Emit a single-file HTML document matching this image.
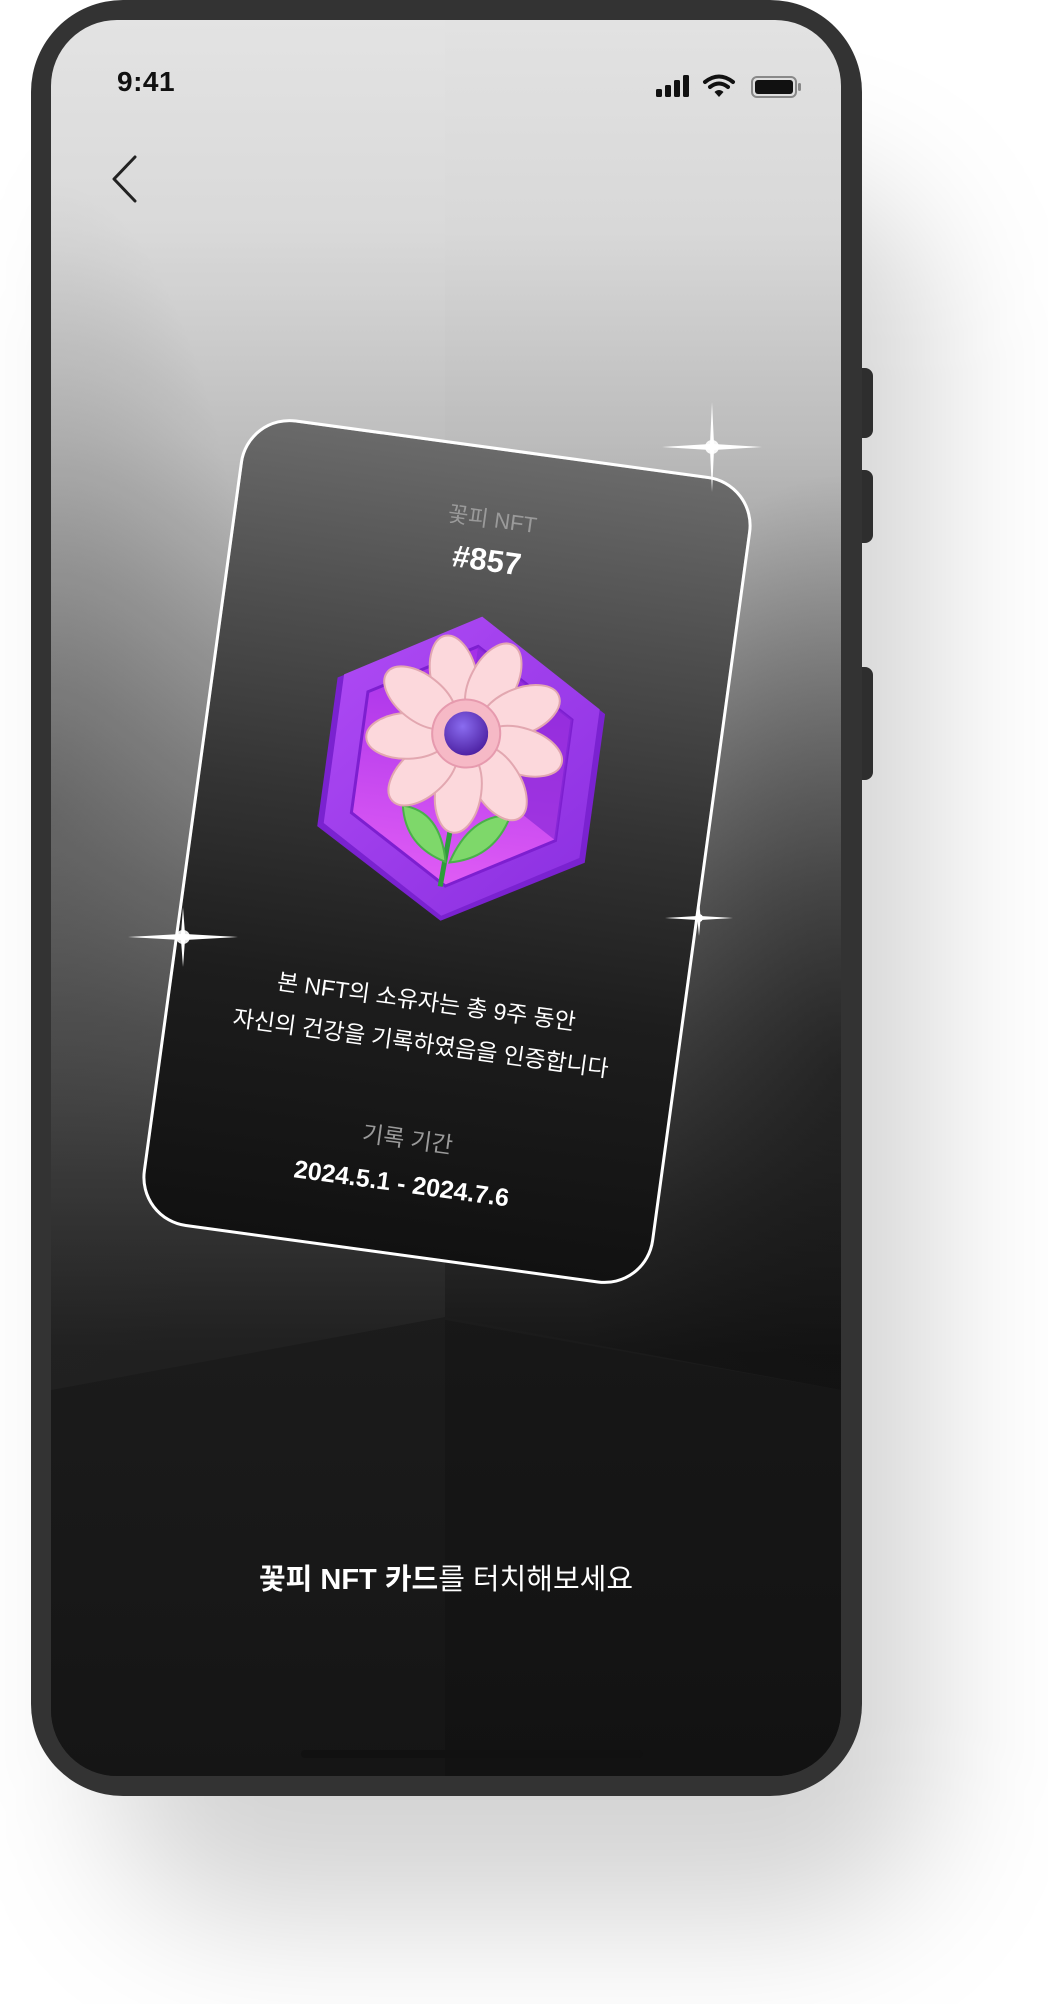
<!DOCTYPE html>
<html><head><meta charset="utf-8">
<style>
*{margin:0;padding:0;box-sizing:border-box}
html,body{width:1048px;height:2004px;background:#fff;overflow:hidden;font-family:"Liberation Sans","Noto Sans CJK KR",sans-serif}
.shadow{position:absolute;left:110px;top:180px;width:820px;height:1740px;border-radius:140px;background:rgba(0,0,0,0.17);filter:blur(70px)}
.phone{position:absolute;left:31px;top:0;width:831px;height:1796px;border-radius:92px;background:#333}
.btn{position:absolute;left:858px;width:15px;background:#2e2e2e;border-radius:0 8px 8px 0}
.screen{position:absolute;left:51px;top:20px;width:790px;height:1756px;border-radius:66px;overflow:hidden;
background:
radial-gradient(ellipse 300px 900px at 0% 45%,rgba(40,40,40,0.3),rgba(40,40,40,0) 70%),
radial-gradient(ellipse 380px 800px at 100% 60%,rgba(10,10,10,0.55),rgba(10,10,10,0) 75%),
linear-gradient(to bottom,#e2e2e2 0%,#d8d8d8 12%,#bcbcbc 24%,#959595 36%,#727272 47%,#4a4a4a 58%,#2a2a2a 68%,#161616 76%,#111 100%)}
.lineL{position:absolute;left:0;top:0;width:394px;height:100%;background:rgba(255,255,255,0.045)}
.floor{position:absolute;left:0;top:0;width:790px;height:1756px;
background:linear-gradient(to bottom,#242424 0%,#1f1f1f 60%,#151515 100%);
clip-path:polygon(0 1370px,394px 1297px,790px 1370px,790px 1756px,0 1756px)}
.floorR{position:absolute;left:394px;top:1300px;width:396px;height:456px;background:rgba(0,0,0,0.12);clip-path:polygon(0 0,396px 70px,396px 456px,0 456px)}
.time{position:absolute;left:66px;top:46px;font-size:28px;font-weight:bold;color:#111;letter-spacing:0.5px}
.bottomtxt{position:absolute;left:0;width:790px;top:1536px;text-align:center;color:#fff;font-size:29px}
.home{position:absolute;left:250px;top:1730px;width:342px;height:8px;border-radius:4px;background:#111}
.card{position:absolute;left:189px;top:444px;width:516px;height:815px;border-radius:50px;border:3px solid #fff;
background:linear-gradient(to bottom,#6a6a6a 0%,#4e4e4e 22%,#333 45%,#1d1d1d 68%,#111 100%);
transform:rotate(7.8deg);text-align:center;color:#fff}
.c1{position:absolute;top:52px;width:100%;font-size:22px;color:#9a9a9a}
.c2{position:absolute;top:93px;width:100%;font-size:31px;font-weight:bold}
.hex{position:absolute;left:113px;top:165px}
.c3{position:absolute;top:535px;width:100%;font-size:23px;line-height:42px}
.c4{position:absolute;top:676px;width:100%;font-size:23px;color:#9a9a9a}
.c5{position:absolute;top:726px;width:100%;font-size:25px;font-weight:bold}
.spark{position:absolute}
</style></head><body>
<div class="shadow"></div>
<div class="btn" style="top:368px;height:70px"></div>
<div class="btn" style="top:470px;height:73px"></div>
<div class="btn" style="top:667px;height:113px"></div>
<div class="phone"></div>
<div class="screen">
  <div class="lineL"></div>
  <div class="floor"></div>
  <div class="floorR"></div>
  <div class="time">9:41</div>
  <svg style="position:absolute;left:605px;top:52px" width="150" height="30" viewBox="0 0 150 30">
    <rect x="0" y="17" width="6" height="8" rx="1.5" fill="#111"/>
    <rect x="9" y="13" width="6" height="12" rx="1.5" fill="#111"/>
    <rect x="18" y="8" width="6" height="17" rx="1.5" fill="#111"/>
    <rect x="27" y="3" width="6" height="22" rx="1.5" fill="#111"/>
    <path d="M49 10 Q63 -1 77 10" stroke="#111" stroke-width="4" fill="none" stroke-linecap="round"/>
    <path d="M54 15 Q63 8 72 15" stroke="#111" stroke-width="4" fill="none" stroke-linecap="round"/>
    <path d="M58.5 20 L63 25 L67.5 20 Q63 16 58.5 20Z" fill="#111"/>
    <rect x="96" y="5" width="44" height="20" rx="5" fill="none" stroke="#888" stroke-width="2"/>
    <rect x="99" y="8" width="38" height="14" rx="3" fill="#111"/>
    <rect x="142" y="11" width="3" height="8" rx="1.5" fill="#888"/>
  </svg>
  <svg style="position:absolute;left:60px;top:135px" width="30" height="50" viewBox="0 0 30 50">
    <path d="M24 2 L3 24 L24 46" stroke="#222" stroke-width="3" fill="none" stroke-linecap="round" stroke-linejoin="round"/>
  </svg>
  <div class="bottomtxt"><b>꽃피 NFT 카드</b>를 터치해보세요</div>
  <div class="home"></div>
</div>

<div class="card">
  <div class="c1">꽃피 NFT</div>
  <div class="c2">#857</div>
  <svg class="hex" width="290" height="310" viewBox="0 0 290 310">
    <defs>
      <linearGradient id="hg" x1="0" y1="0" x2="1" y2="1"><stop offset="0" stop-color="#b04bf5"/><stop offset="1" stop-color="#8a2fe0"/></linearGradient>
      <linearGradient id="ig" x1="0" y1="0" x2="0" y2="1"><stop offset="0" stop-color="#a22ee8"/><stop offset="1" stop-color="#e05cf5"/></linearGradient>
      <radialGradient id="cg" cx="0.4" cy="0.35" r="0.7"><stop offset="0" stop-color="#8a6cf0"/><stop offset="1" stop-color="#4b1fa0"/></radialGradient>
    </defs>
    <polygon points="145,5 280,82 280,232 145,309 10,232 10,82" fill="#7a22d0"/>
    <polygon points="145,2 274,78 274,228 145,304 16,228 16,78" fill="url(#hg)"/>
    <polygon points="145,32 248,92 248,214 145,274 42,214 42,92" fill="url(#ig)" stroke="#7d1fd0" stroke-width="3"/>
    <polygon points="145,32 248,92 248,214 145,153" fill="#8a2ad8" opacity="0.7"/>
    <path d="M145 150 L140 275" stroke="#2e9e3a" stroke-width="5"/>
    <path d="M142 250 Q100 240 92 200 Q130 200 142 250Z" fill="#7ed86a" stroke="#4ab04a" stroke-width="2"/>
    <path d="M146 250 Q190 240 200 195 Q160 200 146 250Z" fill="#7ed86a" stroke="#4ab04a" stroke-width="2"/>
    <g fill="#fcd8dc" stroke="#e2a7b0" stroke-width="2">
      <g transform="translate(145,120)">
        <ellipse cx="0" cy="-58" rx="23" ry="42" transform="rotate(-20)"/>
        <ellipse cx="0" cy="-58" rx="23" ry="42" transform="rotate(20)"/>
        <ellipse cx="0" cy="-58" rx="23" ry="42" transform="rotate(60)"/>
        <ellipse cx="0" cy="-58" rx="23" ry="42" transform="rotate(100)"/>
        <ellipse cx="0" cy="-58" rx="23" ry="42" transform="rotate(140)"/>
        <ellipse cx="0" cy="-58" rx="23" ry="42" transform="rotate(180)"/>
        <ellipse cx="0" cy="-58" rx="23" ry="42" transform="rotate(220)"/>
        <ellipse cx="0" cy="-58" rx="23" ry="42" transform="rotate(260)"/>
        <ellipse cx="0" cy="-58" rx="23" ry="42" transform="rotate(300)"/>
      </g>
    </g>
    <circle cx="145" cy="120" r="34" fill="#f6b9c6" stroke="#e69aae" stroke-width="2"/>
    <circle cx="145" cy="120" r="22" fill="url(#cg)"/>
  </svg>
  <div class="c3">본 NFT의 소유자는 총 9주 동안<br>자신의 건강을 기록하였음을 인증합니다</div>
  <div class="c4">기록 기간</div>
  <div class="c5">2024.5.1 - 2024.7.6</div>
</div>

<svg class="spark" style="left:652px;top:387px" width="120" height="120" viewBox="-60 -60 120 120">
  <path d="M0 -45 L2 -3 L50 0 L2 3 L0 45 L-2 3 L-50 0 L-2 -3Z" fill="#fff"/>
  <circle r="7" fill="#fff" opacity="0.9"/>
</svg>
<svg class="spark" style="left:123px;top:877px" width="120" height="120" viewBox="-60 -60 120 120">
  <path d="M0 -30 L2 -3 L55 0 L2 3 L0 30 L-2 3 L-55 0 L-2 -3Z" fill="#fff"/>
  <circle r="7" fill="#fff" opacity="0.9"/>
</svg>
<svg class="spark" style="left:659px;top:888px" width="80" height="60" viewBox="-40 -30 80 60">
  <path d="M0 -18 L1.5 -2 L34 0 L1.5 2 L0 18 L-1.5 2 L-34 0 L-1.5 -2Z" fill="#fff"/>
  <circle r="4" fill="#fff"/>
</svg>
</body></html>
